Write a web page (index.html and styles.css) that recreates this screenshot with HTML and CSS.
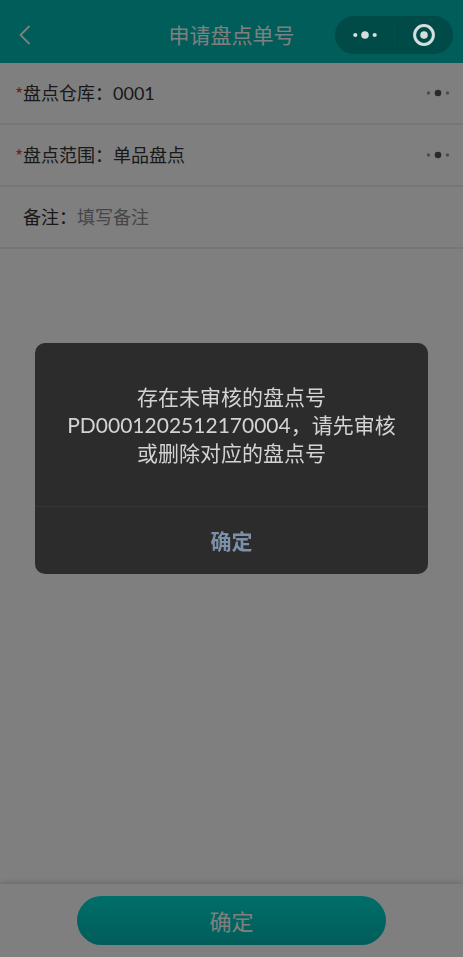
FILE: index.html
```
<!DOCTYPE html>
<html lang="zh-CN">
<head>
<meta charset="utf-8">
<meta name="viewport" content="width=device-width, initial-scale=1">
<title>申请盘点单号</title>
<link rel="stylesheet" href="styles.css">
</head>
<body>
<div class="page">
  <header class="navbar">
    <button class="back" type="button" aria-label="返回">
      <svg width="12" height="20" viewBox="0 0 12 20" fill="none" stroke="currentColor" stroke-width="1.8"><path d="M10.5 1 1.5 10l9 9"/></svg>
    </button>
    <h1 class="title">申请盘点单号</h1>
    <div class="capsule">
      <button type="button" aria-label="更多">
        <svg width="24" height="8" viewBox="0 0 24 8" fill="currentColor"><circle cx="2.3" cy="4" r="2.1"/><circle cx="12" cy="4" r="3.8"/><circle cx="21.7" cy="4" r="2.1"/></svg>
      </button>
      <button type="button" aria-label="关闭">
        <svg width="22" height="22" viewBox="0 0 22 22"><circle cx="11" cy="11" r="9.4" fill="none" stroke="currentColor" stroke-width="3"/><circle cx="11" cy="11" r="3.8" fill="currentColor"/></svg>
      </button>
    </div>
  </header>

  <main class="content">
    <form class="form" id="apply">
      <div class="row">
        <span class="mark">*</span>
        <label for="warehouse">盘点仓库：</label>
        <input id="warehouse" type="text" value="0001" readonly>
        <button class="pick" type="button" aria-label="选择仓库">
          <svg width="24" height="8" viewBox="0 0 24 8" fill="currentColor"><circle class="faint" cx="2.5" cy="4" r="1.7"/><circle cx="12" cy="4" r="3.3"/><circle class="faint" cx="21.5" cy="4" r="1.7"/></svg>
        </button>
      </div>
      <div class="row">
        <span class="mark">*</span>
        <label for="scope">盘点范围：</label>
        <input id="scope" type="text" value="单品盘点" readonly>
        <button class="pick" type="button" aria-label="选择范围">
          <svg width="24" height="8" viewBox="0 0 24 8" fill="currentColor"><circle class="faint" cx="2.5" cy="4" r="1.7"/><circle cx="12" cy="4" r="3.3"/><circle class="faint" cx="21.5" cy="4" r="1.7"/></svg>
        </button>
      </div>
      <div class="row">
        <span class="mark"></span>
        <label for="remark">备注：</label>
        <input id="remark" type="text" placeholder="填写备注">
      </div>
    </form>
  </main>

  <footer class="footer">
    <button class="submit" type="submit" form="apply">确定</button>
  </footer>
</div>

<div class="mask">
  <div class="dialog" role="alertdialog" aria-modal="true" aria-describedby="message">
    <p class="message" id="message">存在未审核的盘点号PD0001202512170004，请先审核或删除对应的盘点号</p>
    <button class="confirm" type="button">确定</button>
  </div>
</div>
</body>
</html>
```
FILE: styles.css
```
* {
  box-sizing: border-box;
}

body {
  margin: 0;
  font-family: Lato, "Noto Sans CJK SC", sans-serif;
  font-size: 18px;
  color: #333;
  background: #fff;
}

button,
input {
  margin: 0;
  padding: 0;
  border: 0;
  font: inherit;
  color: inherit;
  background: none;
}

svg {
  display: block;
}

.page {
  display: flex;
  flex-direction: column;
  min-height: 100vh;
}

.navbar {
  display: grid;
  grid-template-columns: 1fr auto 1fr;
  align-items: center;
  height: 63px;
  padding: 7px 10px 0;
  color: #fff;
  background: #00bab2;
}

.back {
  justify-self: start;
  padding: 6px 9px;
}

.title {
  margin: 0;
  font-size: 21px;
  font-weight: 400;
  line-height: 28px;
}

/* The capsule stays above the mask and keeps its full brightness. */
.capsule {
  position: relative;
  z-index: 20;
  justify-self: end;
  display: flex;
  width: 118px;
  height: 38px;
  border-radius: 19px;
  color: #d3dfde;
  background: #004a47;
}

.capsule button {
  flex: 1;
  display: flex;
  align-items: center;
  justify-content: center;
}

.capsule button + button::before {
  content: "";
  position: absolute;
  left: 50%;
  top: 8px;
  bottom: 8px;
  width: 1px;
  background: #00504c;
}

.content {
  flex: 1;
}

.row {
  display: flex;
  align-items: center;
  height: 62px;
  padding: 0 13px 0 15px;
  line-height: 24px;
  border-bottom: 2px solid #ececec;
}

.mark {
  width: 8px;
  font-family: "Noto Sans CJK SC", sans-serif;
  color: #f03c3c;
}

.row input {
  flex: 1;
  min-width: 0;
  outline: 0;
}

.row input::placeholder {
  color: #8c8c8c;
  opacity: 1;
}

.pick {
  color: #555;
}

.faint {
  fill: #999;
}

.footer {
  padding: 12px 77px;
  background: #fff;
  box-shadow: 0 -1px 6px rgba(0, 0, 0, 0.2);
}

.submit {
  display: block;
  width: 100%;
  height: 49px;
  padding-bottom: 2px;
  border-radius: 25px;
  font-size: 22px;
  color: #fff;
  background: linear-gradient(#00dcd4, #00bab2);
}

.mask {
  position: fixed;
  inset: 0;
  z-index: 10;
  display: flex;
  align-items: center;
  justify-content: center;
  padding-bottom: 40px;
  background: rgba(0, 0, 0, 0.5);
}

.dialog {
  width: 85%;
  border-radius: 10px;
  overflow: hidden;
  font-size: 21px;
  text-align: center;
  background: #2c2c2c;
}

.message {
  margin: 0;
  padding: 40px 30px 39px;
  line-height: 28px;
  color: #d3d3d3;
}

.confirm {
  width: 100%;
  height: 68px;
  padding-bottom: 2px;
  border-top: 1px solid #343434;
  font-weight: 700;
  color: #7d90a9;
}
```
